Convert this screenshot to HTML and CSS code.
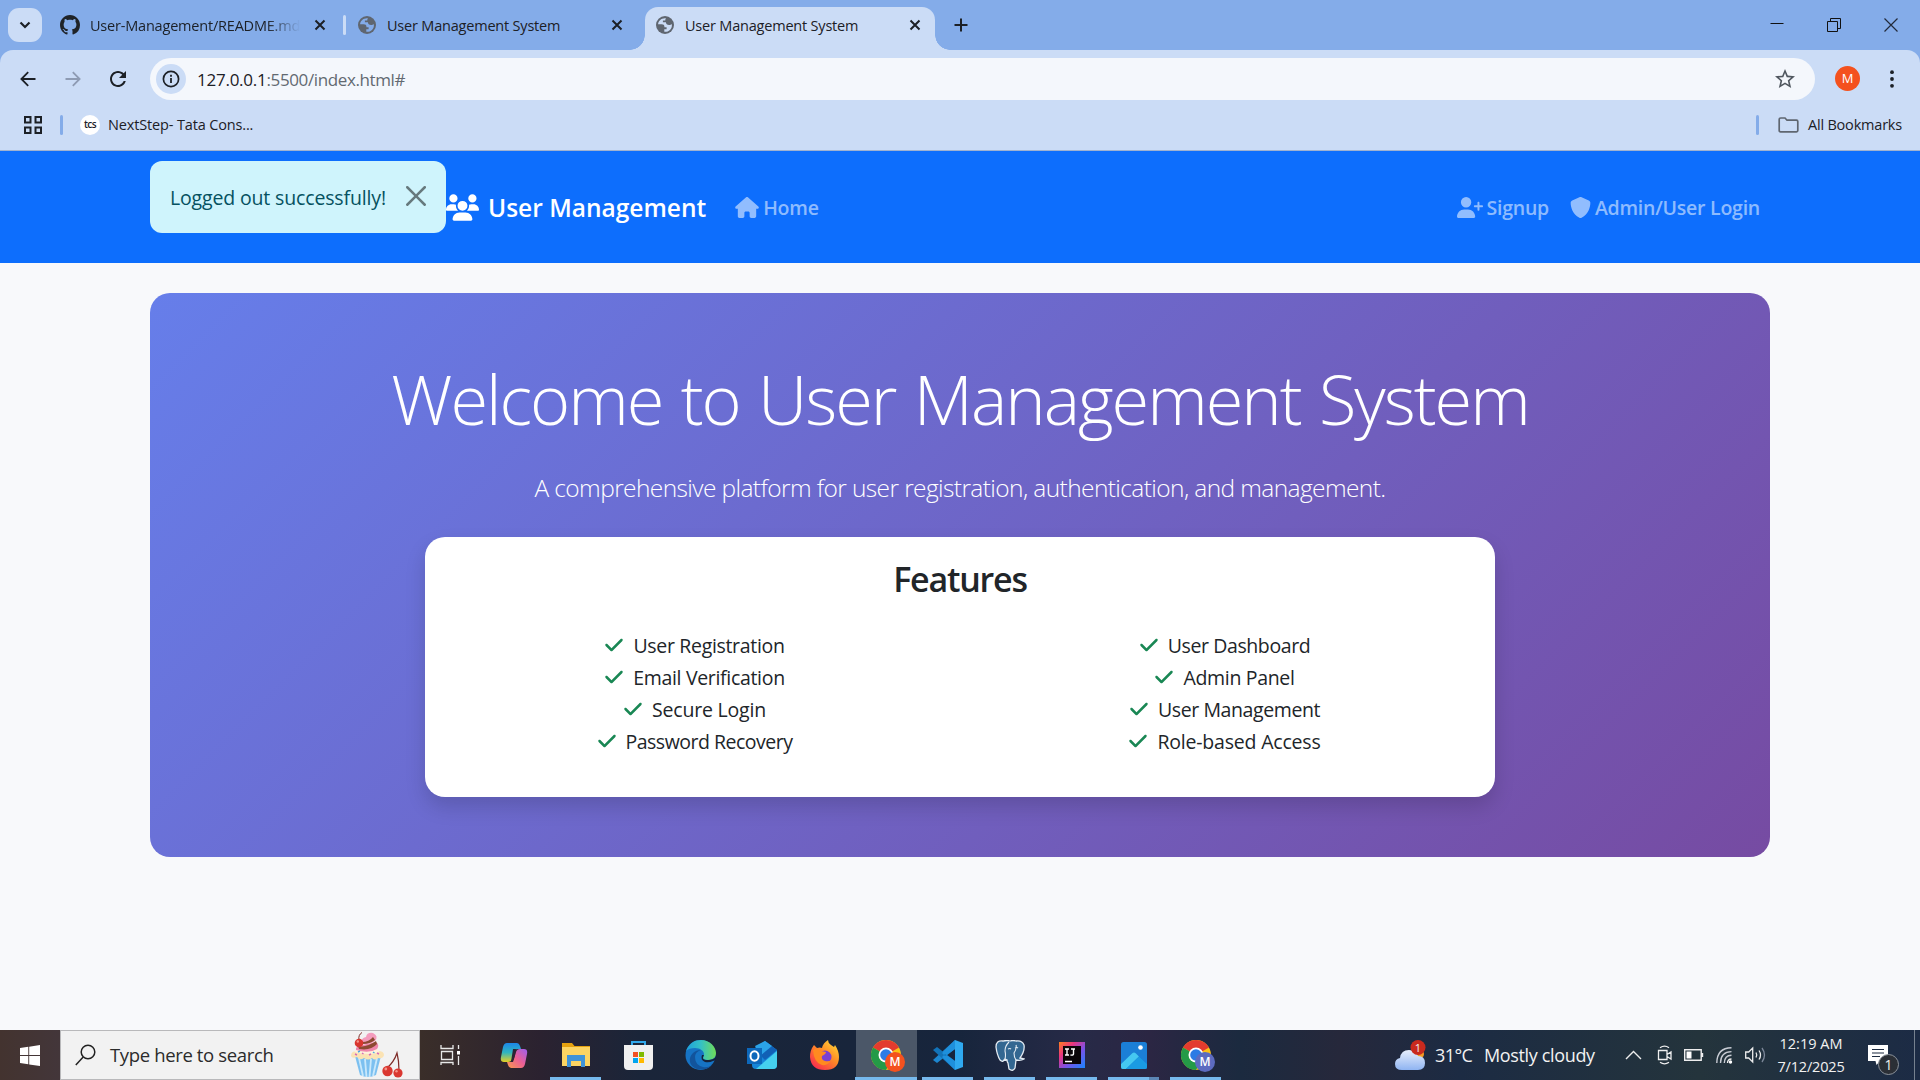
FILE: index.html
```html
<!DOCTYPE html>
<html lang="en">
<head>
<meta charset="utf-8">
<title>User Management System</title>
<link rel="stylesheet" href="styles.css">
</head>
<body>
<svg class="defs" aria-hidden="true">
  <symbol id="x" viewBox="0 0 12 12"><path d="M1.5 1.5l9 9M10.5 1.5l-9 9" fill="none" stroke="#1c2026" stroke-width="2"/></symbol>
  <symbol id="globe" viewBox="0 0 18 18"><circle cx="9" cy="9" r="9" fill="#5f6670"/><path d="M10 2.2C5.500 1.600 2.200 4.900 2.100 8.200H5.700c1.700 0 2.700.9 2.700 2.300v.8h2.200v2H8.300v2.500c4.200.5 7.600-2.700 7.600-6.400 0-.6-.1-1-.2-1.500-.7.8-1.500 1.100-2.600 1.100-2 0-3.200-1.200-3.200-2.700H6.900V4.600h2.400c-.1-1 .1-1.700.7-2.400z" class="land"/></symbol>
  <symbol id="check" viewBox="0 0 448 512"><path fill="currentColor" d="M438.6 105.4c12.500 12.500 12.500 32.800 0 45.300l-256 256c-12.500 12.500-32.800 12.500-45.300 0l-128-128c-12.500-12.500-12.500-32.800 0-45.300s32.800-12.500 45.300 0L160 338.700 393.400 105.400c12.500-12.500 32.800-12.500 45.300 0z"/></symbol>
  <symbol id="chrome" viewBox="0 0 32 32"><circle cx="16" cy="16" r="15" fill="#fbc116"/><path d="M16 16L3 8.500A15 15 0 0 1 29 8.500z" fill="#e33b2e"/><path d="M3 8.500A15 15 0 0 0 16 31l6.500-11.300L16 16z" fill="#249a47"/><path d="M3 8.500h26L16 9z" fill="#e33b2e"/><circle cx="16" cy="16" r="7.500" fill="#fff"/><circle cx="16" cy="16" r="5.800" fill="#2c7be5"/></symbol>
</svg>

<div class="tabstrip">
  <div class="tab-search"><svg width="12" height="8" viewBox="0 0 12 8"><path d="M1.500 1.500L6 6l4.500-4.500" fill="none" stroke="#1c2026" stroke-width="2.200"/></svg></div>
  <div class="tab tab-github">
    <svg width="20" height="20" viewBox="0 0 16 16"><path fill="#1f2328" d="M8 0C3.58 0 0 3.58 0 8c0 3.54 2.29 6.53 5.47 7.59.4.07.55-.17.55-.38 0-.19-.01-.82-.01-1.49-2.01.37-2.53-.49-2.69-.94-.09-.23-.48-.94-.82-1.13-.28-.15-.68-.52-.01-.53.63-.01 1.080.58 1.230.82.72 1.210 1.870.87 2.330.66.07-.52.28-.87.51-1.070-1.780-.2-3.640-.89-3.640-3.950 0-.87.31-1.590.82-2.150-.08-.2-.36-1.020.08-2.120 0 0 .67-.21 2.200.82.64-.18 1.320-.27 2-.27s1.360.09 2 .27c1.530-1.040 2.200-.82 2.200-.82.44 1.100.16 1.920.08 2.120.51.56.82 1.270.82 2.150 0 3.070-1.870 3.750-3.650 3.950.29.25.54.73.54 1.480 0 1.070-.01 1.930-.01 2.200 0 .21.15.46.55.38A8.010 8.010 0 0016 8c0-4.420-3.580-8-8-8z"/></svg>
    <span class="tab-title fade">User-Management/README.md</span>
    <svg width="12" height="12"><use href="#x"/></svg>
  </div>
  <div class="tab-sep"></div>
  <div class="tab tab-idle">
    <svg class="g-idle" width="18" height="18"><use href="#globe"/></svg>
    <span class="tab-title">User Management System</span>
    <svg width="12" height="12"><use href="#x"/></svg>
  </div>
  <div class="tab tab-active">
    <svg class="g-active" width="18" height="18"><use href="#globe"/></svg>
    <span class="tab-title">User Management System</span>
    <svg width="12" height="12"><use href="#x"/></svg>
  </div>
  <svg class="plus" width="14" height="14" viewBox="0 0 14 14"><path d="M7 .5v13M.5 7h13" stroke="#1c2026" stroke-width="2"/></svg>
  <div class="win">
    <svg width="14" height="14" viewBox="0 0 14 14"><path d="M.5 5.500h13" stroke="#111" stroke-width="1"/></svg>
    <svg width="14" height="14" viewBox="0 0 14 14"><path d="M.5 3.500h10v10H.5zM3.500 3.500v-3h10V10.500h-3" fill="none" stroke="#111"/></svg>
    <svg width="14" height="14" viewBox="0 0 14 14"><path d="M.5.500l13 13M13.500.500l-13 13" stroke="#222a3a" stroke-width="1.200"/></svg>
  </div>
</div>

<div class="chrome-body">
  <div class="toolbar">
    <svg width="16" height="16" viewBox="0 0 16 16"><path d="M15.500 8H2M8.200 1.200L1.400 8l6.800 6.800" fill="none" stroke="#1c2026" stroke-width="1.800"/></svg>
    <svg width="16" height="16" viewBox="0 0 16 16"><path d="M.5 8H14M7.800 1.200L14.600 8l-6.800 6.800" fill="none" stroke="#8e9bb3" stroke-width="1.800"/></svg>
    <svg width="16" height="16" viewBox="4 4 16 16"><path fill="#1c2026" d="M17.650 6.350C16.200 4.900 14.210 4 12 4c-4.420 0-7.990 3.580-7.990 8s3.570 8 7.990 8c3.730 0 6.840-2.550 7.730-6h-2.080c-.82 2.330-3.040 4-5.650 4-3.310 0-6-2.690-6-6s2.690-6 6-6c1.660 0 3.140.69 4.220 1.780L13 11h7V4l-2.350 2.350z"/></svg>
    <div class="omnibox">
      <div class="info"><svg width="18" height="18" viewBox="0 0 18 18"><circle cx="9" cy="9" r="7.600" fill="none" stroke="#1c2026" stroke-width="1.700"/><path d="M9 8v5M9 4.800v1.900" stroke="#1c2026" stroke-width="1.800"/></svg></div>
      <span class="url"><b>127.0.0.1</b>:5500/index.html#</span>
      <svg class="star" width="20" height="20" viewBox="2 2 20 20"><path fill="#50575f" d="M22 9.240l-7.190-.62L12 2 9.190 8.630 2 9.240l5.460 4.730L5.820 21 12 17.270 18.180 21l-1.630-7.030L22 9.240zM12 15.400l-3.760 2.270 1-4.280-3.320-2.880 4.380-.38L12 6.100l1.710 4.040 4.380.38-3.320 2.880 1 4.280L12 15.400z"/></svg>
    </div>
    <div class="avatar">M</div>
    <svg class="kebab" width="4" height="18" viewBox="0 0 4 18"><circle cx="2" cy="2.200" r="1.900"/><circle cx="2" cy="9" r="1.900"/><circle cx="2" cy="15.800" r="1.900"/></svg>
  </div>
  <div class="bookmarks">
    <svg width="18" height="18" viewBox="0 0 18 18"><path d="M1 1h5.500v5.500H1zM11.500 1H17v5.500h-5.500zM1 11.500h5.500V17H1zM11.500 11.500H17V17h-5.500z" fill="none" stroke="#1c2026" stroke-width="2"/></svg>
    <i class="bar"></i>
    <span class="tcs">tcs</span>
    <span class="bm">NextStep- Tata Cons...</span>
    <i class="bar bar-right"></i>
    <svg width="21" height="16" viewBox="0 0 21 16"><path d="M1.200 2.500q0-1.500 1.500-1.500H7l2 2.200h9.500q1.300 0 1.300 1.300v9q0 1.300-1.300 1.300h-16q-1.300 0-1.300-1.300z" fill="none" stroke="#5f6670" stroke-width="1.700"/></svg>
    <span class="bm bm-all">All Bookmarks</span>
  </div>
</div>

<nav class="navbar">
  <div class="alert">
    <span>Logged out successfully!</span>
    <svg width="20" height="20" viewBox="0 0 16 16"><path d="M.293.293a1 1 0 011.414 0L8 6.586 14.293.293a1 1 0 111.414 1.414L9.414 8l6.293 6.293a1 1 0 01-1.414 1.414L8 9.414l-6.293 6.293a1 1 0 01-1.414-1.414L6.586 8 .293 1.707a1 1 0 010-1.414z"/></svg>
  </div>
  <div class="brand">
    <svg width="33" height="27" viewBox="0 0 640 512"><path fill="#fff" d="M144 0a80 80 0 1 1 0 160A80 80 0 1 1 144 0zM512 0a80 80 0 1 1 0 160A80 80 0 1 1 512 0zM0 298.700C0 239.800 47.800 192 106.700 192l42.700 0c15.900 0 31 3.500 44.600 9.700c-1.300 7.200-1.900 14.700-1.900 22.300c0 38.200 16.800 72.500 43.300 96c-.2 0-.4 0-.7 0L21.300 320C9.600 320 0 310.400 0 298.700zM405.300 320c-.2 0-.4 0-.7 0c26.600-23.500 43.300-57.800 43.300-96c0-7.600-.7-15-1.900-22.300c13.600-6.300 28.700-9.700 44.600-9.700l42.700 0C592.200 192 640 239.800 640 298.700c0 11.800-9.600 21.300-21.300 21.300l-213.300 0zM224 224a96 96 0 1 1 192 0 96 96 0 1 1 -192 0zM128 485.300C128 411.700 187.700 352 261.300 352l117.300 0C452.300 352 512 411.700 512 485.300c0 14.700-11.900 26.700-26.700 26.700l-330.700 0c-14.700 0-26.700-11.900-26.700-26.700z"/></svg>
    <span>User Management</span>
  </div>
  <a class="link home"><svg width="24" height="21" viewBox="0 0 576 512"><path fill="currentColor" d="M575.800 255.500c0 18-15 32.100-32 32.100l-32 0 .7 160.200c0 2.700-.2 5.400-.5 8.100l0 16.200c0 22.100-17.900 40-40 40l-16 0c-1.100 0-2.200 0-3.300-.1c-1.400 .1-2.800 .1-4.200 .1L416 512l-24 0c-22.100 0-40-17.900-40-40l0-24 0-64c0-17.700-14.300-32-32-32l-64 0c-17.700 0-32 14.300-32 32l0 64 0 24c0 22.100-17.900 40-40 40l-24 0-31.900 0c-1.500 0-3-.1-4.500-.2c-1.200 .1-2.400 .2-3.600 .2l-16 0c-22.100 0-40-17.900-40-40l0-112c0-.9 0-1.900 .1-2.800l0-69.700-32 0c-18 0-32-14-32-32.100c0-9 3-17 10-24L266.400 8c7-7 15-8 22-8s15 2 21 7L564.800 231.500c8 7 12 15 11 24z"/></svg><span>Home</span></a>
  <a class="link signup"><svg width="26" height="21" viewBox="0 0 640 512"><path fill="currentColor" d="M96 128a128 128 0 1 1 256 0A128 128 0 1 1 96 128zM0 482.300C0 383.800 79.800 304 178.300 304l91.400 0C368.200 304 448 383.800 448 482.300c0 16.400-13.300 29.700-29.700 29.700L29.700 512C13.300 512 0 498.700 0 482.300zM504 312l0-64-64 0c-13.300 0-24-10.700-24-24s10.700-24 24-24l64 0 0-64c0-13.300 10.700-24 24-24s24 10.700 24 24l0 64 64 0c13.300 0 24 10.700 24 24s-10.700 24-24 24l-64 0 0 64c0 13.300-10.700 24-24 24s-24-10.700-24-24z"/></svg><span>Signup</span></a>
  <a class="link login"><svg width="21" height="21" viewBox="0 0 512 512"><path fill="currentColor" d="M256 0c4.600 0 9.200 1 13.400 2.900L457.700 82.800c22 9.300 38.400 31 38.300 57.200c-.5 99.200-41.300 280.700-213.600 363.200c-16.700 8-36.100 8-52.800 0C57.300 420.700 16.500 239.200 16 140c-.1-26.200 16.300-47.900 38.300-57.200L242.700 2.900C246.800 1 251.400 0 256 0z"/></svg><span>Admin/User Login</span></a>
</nav>

<main class="page">
  <section class="hero">
    <h1>Welcome to User Management System</h1>
    <p class="lead">A comprehensive platform for user registration, authentication, and management.</p>
    <div class="card">
      <h3>Features</h3>
      <div class="cols">
        <ul>
          <li><svg><use href="#check"/></svg>User Registration</li>
          <li><svg><use href="#check"/></svg>Email Verification</li>
          <li class="loose"><svg><use href="#check"/></svg>Secure Login</li>
          <li class="tight"><svg><use href="#check"/></svg>Password Recovery</li>
        </ul>
        <ul>
          <li class="mid"><svg><use href="#check"/></svg>User Dashboard</li>
          <li><svg><use href="#check"/></svg>Admin Panel</li>
          <li class="mid"><svg><use href="#check"/></svg>User Management</li>
          <li class="loose"><svg><use href="#check"/></svg>Role-based Access</li>
        </ul>
      </div>
    </div>
  </section>
</main>

<footer class="taskbar">
  <div class="start"><svg width="20" height="21" viewBox="0 0 20 21"><path fill="#fff" d="M0 3l8.300-1.200v8.300H0zM9.200 1.700L20 0v10.100H9.200zM0 11h8.300v8.300L0 18zM9.200 11H20v10L9.200 19.400z"/></svg></div>
  <div class="search">
    <svg width="21" height="22" viewBox="0 0 21 22"><circle cx="13" cy="8" r="6.800" fill="none" stroke="#222" stroke-width="1.500"/><path d="M8.200 13L.8 21" stroke="#222" stroke-width="1.500"/></svg>
    <span>Type here to search</span>
    <svg class="treat" width="54" height="46" viewBox="0 0 54 46">
      <path d="M5 24h26l-5 19q-8 4-16 0z" fill="#7cc0f0"/><path d="M9 26l4 18M15 27l1.500 18M21 27l-1.500 18M27 26l-4 18" stroke="#c9e8fb" stroke-width="1.800"/>
      <path d="M1 24q0-5 6-5 4-5 11-5t10 5q6 0 6 4-1 4-6 3-3 3-6 0-4 3-8 0-4 3-7-1-5 2-6-1z" fill="#fbe3b4"/>
      <path d="M4 20q3-5 14-6 10 0 11 6-8 4-25 0z" fill="#fff1dd"/>
      <path d="M6 18q-1-4 6-5l14-3q4 3 1 7-8 5-21 1z" fill="#ef86ac"/><path d="M8 14q8 2 18-5l1 3q-6 7-18 5z" fill="#8d4a32"/>
      <path d="M11 11q0-5 5-6 1-5 7-4 6 3 2 8-6 5-14 2z" fill="#f49cbd"/><path d="M12 10q7 0 11-5l2 3q-5 4-12 4z" fill="#8d4a32"/>
      <path d="M9 8Q8 3 12 .5" stroke="#7e2b27" fill="none"/><circle cx="9" cy="11" r="4.300" fill="#d9362f"/><circle cx="7.800" cy="9.500" r="1.200" fill="#f39489"/>
      <path d="M5 22l2 1M12 21l1.500 1M19 23l2-1M27 21l2 1" stroke="#d56cb8" stroke-width="1.400"/><path d="M8 20l2-1M23 20l1.500 1" stroke="#4aa8e0" stroke-width="1.400"/>
      <path d="M37 36q7-6 10-15 2 8 2 17" fill="none" stroke="#7e2b27" stroke-width="1.200"/><circle cx="37.500" cy="39" r="5.200" fill="#da3831"/><circle cx="48" cy="41" r="4.600" fill="#da3831"/><circle cx="35.800" cy="37" r="1.400" fill="#f39489"/><circle cx="46.500" cy="39.300" r="1.200" fill="#f39489"/>
    </svg>
  </div>
  <div class="apps">
    <div class="app"><svg width="21" height="20" viewBox="0 0 21 20"><path d="M1.500 6.500h11v8h-11zM1 0v3.500h12V0M1 20v-2.500h12V20M18.500 0v4M18.500 11v9" fill="none" stroke="#e8e8e8" stroke-width="1.300"/><path d="M17 6h3v3.500h-3z" fill="#fff"/></svg></div>
    <div class="app"><svg width="28" height="27" viewBox="0 0 28 27"><defs><linearGradient id="cp1" x2="0" y2="1"><stop stop-color="#1c86e8"/><stop offset=".5" stop-color="#2fb5c0"/><stop offset="1" stop-color="#e6d022"/></linearGradient><linearGradient id="cp2" x1="1" x2="0" y2="1"><stop stop-color="#9b60ee"/><stop offset=".5" stop-color="#ec5f93"/><stop offset="1" stop-color="#fa9b4b"/></linearGradient></defs><path d="M7 1h10q2 0 3 3l1 3h-4q-2 0-3 3l-2 7q-1 3-4 3H4q-4 0-3-5L3 5q1-4 4-4z" fill="url(#cp1)"/><path d="M21 26H11q-2 0-3-3l-1-3h4q2 0 3-3l2-7q1-3 4-3h4q4 0 3 5l-2 10q-1 4-4 4z" fill="url(#cp2)"/><path d="M13 7h3l-1 6-2 7h-2z" fill="#2c2434"/></svg></div>
    <div class="app open"><svg width="28" height="24" viewBox="0 0 28 24"><path d="M0 0h10l2.500 3H28v8H0z" fill="#e5a10f"/><path d="M0 4h28v19H0z" fill="#fcd462"/><path d="M5 24V12h18v12h-4v-6H9v6z" fill="#3f93d8"/></svg></div>
    <div class="app"><svg width="29" height="30" viewBox="0 0 29 30"><path d="M8 7V2h13v5" fill="none" stroke="#31a8ea" stroke-width="2"/><path d="M0 5h29v21q0 4-4 4H4q-4 0-4-4z" fill="#f0f0f0"/><path d="M9 12h5v5H9z" fill="#f25022"/><path d="M15 12h5v5h-5z" fill="#7fba00"/><path d="M9 18h5v5H9z" fill="#00a4ef"/><path d="M15 18h5v5h-5z" fill="#ffb900"/></svg></div>
    <div class="app"><svg width="31" height="30" viewBox="0 0 31 30"><defs><linearGradient id="ed" x2="1"><stop stop-color="#1ea0dc"/><stop offset=".5" stop-color="#35c1c4"/><stop offset="1" stop-color="#6fdc58"/></linearGradient></defs><circle cx="15.500" cy="15" r="15" fill="#1673c4"/><path d="M1 11C4 3 10 0 16 0c9 0 15 7 15 13 0 5-4 7-8 7-3 0-5-1-5-2 0-1 1-2 1-4 0-3-4-6-9-6-4 0-7 1-9 3z" fill="url(#ed)"/><path d="M10 17q0 8 8 10 5 1 9-2-6 6-15 4C5 27 2 19 8 13q3-3 8-3-6 2-6 7z" fill="#12549c"/><path d="M17 15q-2 5 3 7 4 1 8-1l3-1v-3q-3 3-8 3-5 0-5-2 0-1 1-3z" fill="#14233b"/></svg></div>
    <div class="app"><svg width="30" height="28" viewBox="0 0 30 28"><path d="M5 9L18 0l12 9v15q0 4-4 4H9q-4 0-4-4z" fill="#1686d9"/><path d="M18 0l12 9-12 10-8-8z" fill="#1160b5"/><path d="M8 5l10-5 7 5-12 10z" fill="#2ba3e8"/><path d="M30 10v14q0 4-4 4H9z" fill="#45d0ee"/><path d="M0 7h15v16H0z" fill="#0d68bb"/><ellipse cx="7.500" cy="15" rx="4" ry="4.800" fill="none" stroke="#fff" stroke-width="2"/></svg></div>
    <div class="app"><svg width="29" height="30" viewBox="0 0 29 30"><defs><linearGradient id="ff" x1="1" x2=".2" y2="1"><stop stop-color="#ffe43a"/><stop offset=".5" stop-color="#ff8a26"/><stop offset="1" stop-color="#f9294f"/></linearGradient></defs><path d="M4 5l3 3q3-1 5 0 1-5 6-8 0 3 3 5l3 2 1-2q4 6 4 12 0 13-14 13T0 17Q0 10 4 5z" fill="url(#ff)"/><circle cx="15" cy="17" r="6.500" fill="#7a3fd1"/><path d="M3 10q5-3 8 1l5 1q0 2-4 4-1 4 3 5 4 1 6-1-3 6-9 5-8-2-9-15z" fill="#ff8a20"/></svg></div>
    <div class="app open current"><svg width="32" height="32"><use href="#chrome"/></svg><b class="badge-m">M</b></div>
    <div class="app open"><svg width="30" height="30" viewBox="0 0 30 30"><path d="M22 0l8 3v24l-8 3z" fill="#2fa9ef"/><path d="M22 0v9L4 23l-4-3z" fill="#1c86cf"/><path d="M22 30v-9L4 7l-4 3z" fill="#1273b8"/><path d="M22 0v9l-10 7-3-3zM22 30v-9l-10-7-3 3z" fill="#1e90dc"/></svg></div>
    <div class="app open"><svg width="30" height="31" viewBox="0 0 30 31"><path d="M8 1q-7-1-7 6 1 8 4 13 3 3 5-1l2 1q0 2 1 3l1 6q4 3 6-1l1-8q5 1 8-1l-4-1q5-7 4-13-2-5-8-4-3-1-6 0-3-1-7 0z" fill="#336791" stroke="#e4ebf2" stroke-width="1.300"/><path d="M10 19q1-4 0-8 0-5 4-9M21 20q-2-3-2-7 3-5 2-8M12 20q-2 1-4 0M20 8q2-1 3 0M13 9q2-1 3 0" fill="none" stroke="#e4ebf2" stroke-width="1.100"/></svg></div>
    <div class="app open"><svg width="26" height="26" viewBox="0 0 26 26"><defs><linearGradient id="ij" x2="1" y2="1"><stop stop-color="#fc801d"/><stop offset=".3" stop-color="#e9357f"/><stop offset=".6" stop-color="#7a52e8"/><stop offset="1" stop-color="#1787ff"/></linearGradient></defs><path d="M0 0h26v26H0z" fill="url(#ij)"/><path d="M4 4h18v18H4z" fill="#0a0508"/><path d="M6 7h4M8 7v6M6 13h4M12 7h4M14.500 7v5q0 1.500-3 1M6 19.500h7" fill="none" stroke="#fff" stroke-width="1.400"/></svg></div>
    <div class="app open stacked"><svg width="26" height="27" viewBox="0 0 26 27"><rect width="26" height="27" rx="2.500" fill="#1b7fd6"/><path d="M0 22L11 11.500q2-2 4 0L26 22v3q0 2-2 2H2q-2 0-2-2z" fill="#1579cf"/><path d="M0 22L11 11.500q2-2 4 0l3 3L5 27H2q-2 0-2-2z" fill="#45c8f1"/><path d="M5 27L18 14.500 26 22v3q0 2-2 2z" fill="#1a9be3"/><circle cx="19.500" cy="5.500" r="2.300" fill="#fff"/></svg></div>
    <div class="app open"><svg width="32" height="32"><use href="#chrome"/></svg><b class="badge-m violet">M</b></div>
  </div>
  <div class="weather">
    <div class="cloud">
      <svg width="31" height="30" viewBox="0 0 31 30"><defs><linearGradient id="cl" x2="0" y2="1"><stop stop-color="#e8effc"/><stop offset="1" stop-color="#8fb4f2"/></linearGradient></defs><circle cx="24" cy="14" r="5" fill="#f39a22"/><path d="M7 30q-7 0-7-6 0-5 5-6 1-8 9-8 7 0 9 6 7 0 7 7 0 7-7 7z" fill="url(#cl)"/><circle cx="23" cy="7.500" r="7.500" fill="#c92a1e"/></svg>
      <b class="count">1</b>
    </div>
    <span class="temp">31°C</span><span class="cond">Mostly cloudy</span>
  </div>
  <div class="tray">
    <svg width="17" height="10" viewBox="0 0 17 10"><path d="M1 9l7.500-7.500L16 9" fill="none" stroke="#eee" stroke-width="1.400"/></svg>
    <svg width="16" height="20" viewBox="0 0 16 20"><path d="M1.500 5.500h8.500v9H1.500zM10 9.500l4-2.500v7L10 11.500M3 2.700Q7.500-.5 12 2.700M3 17.300q4.500 3.200 9 0" fill="none" stroke="#eee" stroke-width="1.300"/></svg>
    <svg width="20" height="12" viewBox="0 0 20 12"><path d="M.7.700h16.500v10.600H.7zM18.500 4v4" fill="none" stroke="#eee" stroke-width="1.400"/><path d="M2.500 2.500h5v7h-5z" fill="#fff"/></svg>
    <svg width="17" height="17" viewBox="0 0 17 17"><path d="M.8 16Q1 1 15.500.8M4.500 16Q4.600 4.800 15.500 4.600M8.300 16q.2-7.500 7.200-7.700" fill="none" stroke="#c8ccd4" stroke-width="1.400"/><path d="M11.500 16q.2-4 4-4" fill="none" stroke="#eee" stroke-width="1.400"/><circle cx="14.500" cy="15" r="1.700" fill="#fff"/></svg>
    <svg width="21" height="18" viewBox="0 0 21 18"><path d="M.7 6h3l4-4v14l-4-4h-3zM11 6.500q1.500 2.500 0 5M14 4.500q3 4.500 0 9" fill="none" stroke="#eee" stroke-width="1.300"/><path d="M17 2q5 7 0 14" fill="none" stroke="#7c8799" stroke-width="1.300"/></svg>
  </div>
  <div class="clock"><span class="time">12:19 AM</span><span class="date">7/12/2025</span></div>
  <div class="notify"><svg width="20" height="20" viewBox="0 0 20 20"><path d="M0 0h20v16H12l-3.500 4-1-4H0z" fill="#fff"/><path d="M4 4.500h12M4 8h12M4 11.500h8" stroke="#1c2a40" stroke-width="1.200"/></svg><b>1</b></div>
  <div class="peek"></div>
</footer>
</body>
</html>
```
FILE: styles.css
```css
* { box-sizing: border-box; }
body {
  margin: 0; width: 1920px; height: 1080px; overflow: hidden;
  display: flex; flex-direction: column;
  background: #f8f9fb; color: #212529;
  font-family: "Open Sans", "Noto Sans", sans-serif;
}
svg { display: block; flex: none; }
span { white-space: nowrap; }
.defs { position: absolute; width: 0; height: 0; }

/* Browser tab strip */
.tabstrip { display: flex; align-items: center; height: 50px; flex: none; background: #84ace9; font-size: 14.5px; letter-spacing: -.2px; color: #1c2026; }
.tab-search { width: 34px; height: 34px; margin-left: 8px; border-radius: 11px; background: #cbdcf6; display: flex; align-items: center; justify-content: center; }
.tab { display: flex; align-items: center; height: 50px; flex: none; }
.tab-github { width: 301px; padding-left: 18px; }
.tab-title { margin-left: 10px; }
.fade { width: 210px; overflow: hidden; margin-right: 14px; -webkit-mask-image: linear-gradient(90deg, #000 84%, transparent 100%); mask-image: linear-gradient(90deg, #000 84%, transparent 100%); }
.tab-sep { width: 3px; height: 20px; background: #cbdcf6; border-radius: 2px; }
.tab-idle { width: 299px; padding: 0 22px 0 12px; }
.tab-idle .tab-title, .tab-active .tab-title { flex: 1; margin-left: 11px; }
.g-idle { color: #84ace9; }
.g-active { color: #cbdcf6; }
.land { fill: currentColor; }
.tab-active { position: relative; align-self: flex-end; width: 290px; height: 43px; padding: 0 14px 7px 11px; background: #cbdcf6; border-radius: 13px 13px 0 0; }
.tab-active::before, .tab-active::after { content: ""; position: absolute; bottom: 0; width: 15px; height: 15px; }
.tab-active::before { left: -15px; background: radial-gradient(circle at 0 0, transparent 14.5px, #cbdcf6 15px); }
.tab-active::after { right: -15px; background: radial-gradient(circle at 100% 0, transparent 14.5px, #cbdcf6 15px); }
.plus { margin-left: 19px; }
.win { display: flex; gap: 43px; margin: 0 22px 0 auto; }

/* Toolbar and bookmarks */
.chrome-body { flex: none; height: 101px; background: linear-gradient(#84ace9, #84ace9) 0 0 / 100% 15px no-repeat, #cbdcf6; border-bottom: 1px solid #a0b2d0; }
.toolbar { display: flex; align-items: center; height: 57px; padding-left: 20px; background: #cbdcf6; border-radius: 13px 13px 0 0; }
.toolbar > svg + svg { margin-left: 29px; }
.omnibox { display: flex; align-items: center; width: 1665px; height: 42px; margin-left: 24px; padding-left: 6px; border-radius: 21px; background: #f4f7fc; }
.info { width: 30px; height: 30px; border-radius: 50%; background: #cbdcf6; display: flex; align-items: center; justify-content: center; }
.url { flex: 1; margin-left: 11px; padding-top: 1px; font-size: 17px; letter-spacing: -.38px; color: #626971; }
.url b { font-weight: 400; color: #1c2026; letter-spacing: -.25px; }
.star { margin-right: 20px; }
.avatar { width: 25px; height: 25px; margin-left: 20px; border-radius: 50%; background: #f4511e; color: #fff; font-size: 13px; line-height: 25px; text-align: center; }
.toolbar > .kebab { margin-left: 30px; fill: #1c2026; }
.bookmarks { display: flex; align-items: center; height: 36px; padding: 0 18px 0 24px; font-size: 14.5px; color: #1c2026; }
.bar { width: 3px; height: 20px; margin-left: 18px; border-radius: 2px; background: #84ace9; }
.tcs { width: 20px; height: 20px; margin-left: 17px; border-radius: 50%; background: #fff; font-size: 10px; font-weight: 600; line-height: 18px; text-align: center; letter-spacing: -.6px; }
.bm { margin-left: 8px; padding-bottom: 1px; letter-spacing: -.15px; }
.bar-right { margin-left: auto; margin-right: 19px; }
.bm-all { margin-left: 9px; letter-spacing: -.2px; }

/* Page navbar */
.navbar { display: flex; align-items: center; flex: none; height: 112px; padding: 0 150px; background: #0d6efd; }
.alert { display: flex; align-items: center; justify-content: space-between; align-self: flex-start; width: 296px; height: 72px; margin-top: 10px; padding: 0 20px 2px 20px; border-radius: 12px; background: #cff4fc; color: #055160; font-size: 19.5px; letter-spacing: -.15px; }
.alert span { padding-top: 3px; }
.alert svg { margin-bottom: 1px; fill: #000; opacity: .5; }
.brand { display: flex; align-items: center; gap: 9px; color: #fff; font-size: 24.5px; font-weight: 600; }
.brand span { padding-top: 1px; }
.link { display: flex; align-items: center; gap: 4px; color: rgba(255,255,255,.55); font-size: 19.5px; font-weight: 600; letter-spacing: -.24px; }
.link span { padding-top: 1px; }
.home { margin-left: 29px; gap: 4px; }
.signup { margin-left: auto; }
.login { margin: 0 10px 0 20px; }
.signup svg { margin-right: -1px; }
.signup span { padding-right: 1px; }

/* Hero */
.page { flex: 1; padding: 30px 150px 0; }
.hero { height: 564px; padding-top: 64px; border-radius: 20px; background: linear-gradient(135deg, #667eea 0%, #764ba2 100%); color: #fff; text-align: center; }
h1 { margin: 0; font-size: 68.5px; font-weight: 300; line-height: 84px; letter-spacing: -2px; word-spacing: 2.5px; white-space: nowrap; }
.lead { margin: 28px 0 0; font-size: 24.5px; font-weight: 300; line-height: 37px; letter-spacing: -.6px; }
.card { width: 1070px; height: 260px; margin: 31px auto 0; padding: 21px 5px 0; border-radius: 20px; background: #fff; color: #212529; box-shadow: 0 10px 20px rgba(0,0,0,.15); }
h3 { margin: 0 0 29px; font-size: 34px; font-weight: 600; line-height: 42px; letter-spacing: -1.2px; }
.cols { display: grid; grid-template-columns: 1fr 1fr; }
.cols ul { margin: 0; padding: 0; list-style: none; }
.cols li { display: flex; align-items: center; justify-content: center; height: 32px; font-size: 19.5px; letter-spacing: -.32px; }
.cols li.loose { letter-spacing: -.2px; }
.cols li.tight { letter-spacing: -.5px; }
.cols li.mid { letter-spacing: -.4px; }
.cols svg { width: 18px; height: 20px; margin-right: 10px; color: #198754; }

/* Taskbar */
.taskbar { display: flex; align-items: center; flex: none; height: 50px; color: #f2f2f2; background: linear-gradient(90deg, #43332f 0, #43363a 60px, #3a2e29 420px, #2b2230 540px, #1a2539 640px, #17253c 960px, #272a47 1080px, #2b2643 1150px, #1b2a3f 1240px, #26283b 1340px, #1c2b43 1460px, #24343c 1700px, #1c2b45 1920px); }
.start { display: flex; justify-content: center; width: 60px; }
.search { display: flex; align-items: center; width: 360px; height: 50px; padding-left: 14px; border: 1px solid #b9b9bb; background: #f2f2f2; color: #2b2b2b; font-size: 18.5px; letter-spacing: -.36px; }
.search span { margin-left: 14px; padding-bottom: 1px; }
.search .treat { margin: 0 15px 0 auto; }
.apps { display: flex; }
.app { position: relative; display: flex; align-items: center; justify-content: center; width: 62px; height: 50px; }
.app:first-child { width: 60px; margin-right: 3px; }
.app.open::after { content: ""; position: absolute; left: 5px; right: 6px; bottom: 0; height: 3px; background: #76b9ed; }
.app.current { background: linear-gradient(#4b5768, #4b5768) center / 61px 50px no-repeat; }
.app.current::after { left: 0; right: 0; }
.app.stacked::after { background: linear-gradient(90deg, #76b9ed 41px, #5c86b4 41px); }
.badge-m { position: absolute; left: 30px; top: 22px; width: 20px; height: 20px; border-radius: 50%; background: #f4511e; color: #fff; font-size: 12px; font-weight: 600; line-height: 20px; text-align: center; }
.violet { background: #5c6bc0; }
.weather { display: flex; align-items: center; margin-left: auto; font-size: 18px; }
.cloud { position: relative; margin-bottom: 1px; }
.count { position: absolute; left: 16px; top: 0; width: 14px; font-size: 11px; font-weight: 400; text-align: center; line-height: 15px; }
.temp { width: 41px; margin-left: 9px; letter-spacing: -.6px; }
.cond { width: 112px; margin-left: 8px; letter-spacing: -.35px; }
.tray { display: flex; align-items: center; gap: 13px; margin-left: 29px; }
.tray svg:nth-child(2) { margin-left: 2px; }
.tray svg:nth-child(3) { margin-left: -2px; }
.tray svg:nth-child(4), .tray svg:nth-child(5) { margin-left: -1px; }
.clock { display: flex; flex-direction: column; align-items: center; width: 68px; margin-left: 11px; font-size: 14.5px; line-height: 23px; }
.date { letter-spacing: -.17px; }
.notify { position: relative; margin-left: 23px; }
.notify b { position: absolute; left: 10px; top: 9px; width: 21px; height: 21px; border: 1px solid #8b929b; border-radius: 50%; background: #2b2f36; font-size: 14px; font-weight: 400; line-height: 19px; text-align: center; }
.peek { width: 6px; height: 50px; margin-left: 26px; border-left: 1px solid #76818f; }
```
